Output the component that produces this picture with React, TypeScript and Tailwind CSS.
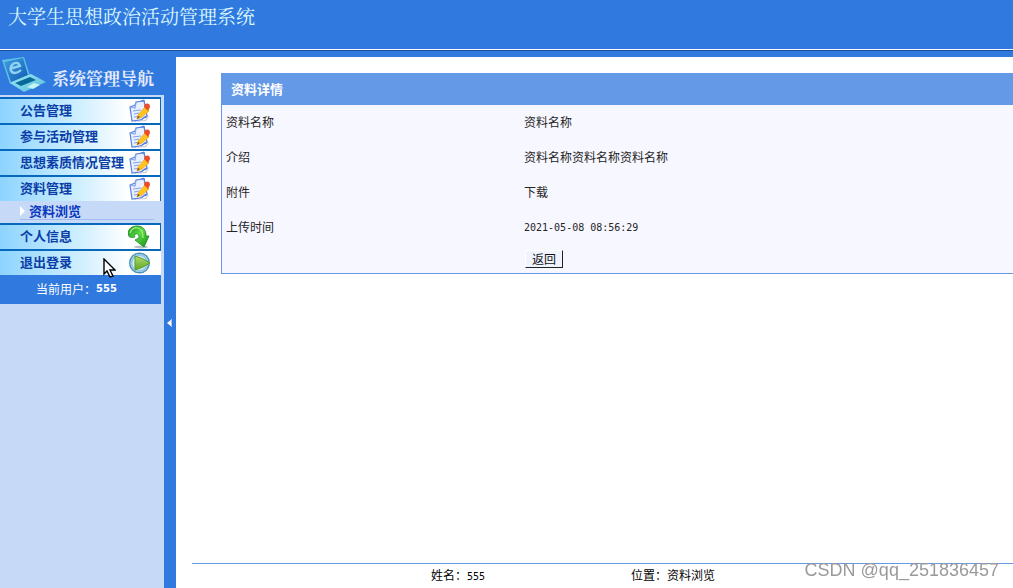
import React from "react";

function LaptopIcon() {
  return (
    <svg viewBox="0 0 46 36" className="h-9 w-[46px] shrink-0" aria-hidden="true">
      <defs>
        <linearGradient id="screen" x1="0" y1="0" x2="1" y2="1">
          <stop offset="0" stopColor="#3fa0e0" />
          <stop offset="1" stopColor="#1259b4" />
        </linearGradient>
        <linearGradient id="deck" x1="0" y1="0" x2="1" y2="1">
          <stop offset="0" stopColor="#a6ecf2" />
          <stop offset="1" stopColor="#4fb9dc" />
        </linearGradient>
      </defs>
      <path d="M2 3 24 0l6 19-20 8z" fill="#5cc3e6" />
      <path d="M4 5 23 1l5 17-17 7z" fill="url(#screen)" />
      <path d="M10 26 31 17l15 8-22 10z" fill="url(#deck)" />
      <path d="M15 26 30 20l6 3-15 6z" fill="#086a98" />
      <path d="m27 30 7-4 6 2-7 4z" fill="#c4f4f4" />
      <path d="M11 11.500 20 9c-1-4-6-4-8-1-3 4-1 8 3 8 3 0 5-2 6-3" fill="none" stroke="#8fd3f4" strokeWidth="2.400" />
    </svg>
  );
}

function NoteIcon() {
  return (
    <svg viewBox="0 0 24 24" className="size-6" aria-hidden="true">
      <path d="m4 23 14-1 4-6-5 5z" fill="#8c8ca0" opacity=".5" />
      <path d="M8 4 16 1l3 17-12 4z" fill="#d9e7ff" stroke="#4b78dc" strokeWidth="1" />
      <path d="m2 8 5-2 1-3 8-1 3 15c-3 0-4 4-7 4l-8 1z" fill="#e8f0ff" stroke="#5b80de" strokeWidth="1.200" />
      <path d="m2 8 5 1 1-6M5 12l8-1M6 15l5-1M6 18l6-1" fill="none" stroke="#83a5ed" strokeWidth="1.200" />
      <path d="m10 16 7-8 4 4-7 6-5 2z" fill="#ffc51e" stroke="#f0a014" strokeWidth=".7" />
      <path d="m10 17 2 1-3 2z" fill="#704c2b" />
      <path d="m16 8 1-3q5-2 5 3l-2 4z" fill="#ee4c27" />
    </svg>
  );
}

function ArrowIcon() {
  return (
    <svg viewBox="0 0 24 24" className="size-6" aria-hidden="true">
      <defs>
        <linearGradient id="leaf" x1="0" y1="0" x2="1" y2="1">
          <stop offset="0" stopColor="#138a20" />
          <stop offset=".45" stopColor="#5fdc44" />
          <stop offset="1" stopColor="#128c16" />
        </linearGradient>
      </defs>
      <ellipse cx="13" cy="22" rx="7" ry="1.500" fill="#8b9b91" opacity=".6" />
      <path d="M0 9C0 4 4 1 9 1c6 0 9 4 9 10h3l-5 11-9-7 4-2c0-3-1-5-3-4-2 0-2 2-1 3-4 1-7 0-7-3z" fill="url(#leaf)" stroke="#15861e" strokeWidth=".8" />
      <path d="M2 8c1-4 5-6 8-5 4 1 5 5 5 10" fill="none" stroke="#a1f378" strokeWidth="1.200" />
    </svg>
  );
}

function PlayIcon() {
  return (
    <svg viewBox="0 0 24 24" className="size-6" aria-hidden="true">
      <defs>
        <linearGradient id="play" x1="0" y1="0" x2="0" y2="1">
          <stop offset="0" stopColor="#b4dc70" />
          <stop offset="1" stopColor="#5aa822" />
        </linearGradient>
      </defs>
      <circle cx="11.500" cy="12" r="9.800" fill="#d6ecf7" stroke="#4a92b8" strokeWidth="1.500" />
      <circle cx="11.500" cy="12" r="8" fill="none" stroke="#8fc8e6" strokeWidth="1.800" />
      <path d="M7 5q8 2 15 7-7 5-15 7z" fill="url(#play)" stroke="#5c9c2c" strokeWidth="1" />
    </svg>
  );
}

type ItemProps = { label: string; icon: React.ReactNode; edge?: boolean };

function MenuItem({ label, icon, edge }: ItemProps) {
  return (
    <a
      href="#"
      className={`flex h-[26px] items-center justify-between border-t-2 border-t-[#0868bd] bg-linear-to-r from-[#8cd4ff] via-[#d0efff] via-50% to-white to-80% pl-5 text-[13px] font-bold whitespace-nowrap text-[#0b3ea6] ${
        edge ? "border-r border-r-[#0868bd] pr-2" : "pr-[9px]"
      }`}
    >
      <span className="pb-0.5">{label}</span>
      <span className="-ml-2 shrink-0">{icon}</span>
    </a>
  );
}

function Sidebar() {
  return (
    <aside className="flex w-[164px] shrink-0 flex-col bg-[#c6daf7]">
      <div className="flex h-[38px] items-start gap-1.5 bg-[#3079df]">
        <LaptopIcon />
        <h2 className="pt-[9px] font-['Noto_Serif_CJK_SC','Noto_Sans_CJK_SC',serif] text-[17px] leading-6 font-bold whitespace-nowrap text-[#e4ebfc]">
          系统管理导航
        </h2>
      </div>
      <nav className="mt-0.5 mr-[3px]">
        <MenuItem label="公告管理" icon={<NoteIcon />} edge />
        <MenuItem label="参与活动管理" icon={<NoteIcon />} edge />
        <MenuItem label="思想素质情况管理" icon={<NoteIcon />} edge />
        <MenuItem label="资料管理" icon={<NoteIcon />} edge />
        <div className="h-[22px] pr-[7px] pl-5">
          <a
            href="#"
            className="flex h-[19px] items-center gap-1 border-b border-[#9fbcf0] pt-0.5 text-[13px] font-bold text-[#0838c0]"
          >
            <svg viewBox="0 0 5 10" className="h-2.5 w-[5px]" aria-hidden="true">
              <path d="M0 0 5 5 0 10z" fill="#fff" />
            </svg>
            资料浏览
          </a>
        </div>
        <MenuItem label="个人信息" icon={<ArrowIcon />} edge />
        <MenuItem label="退出登录" icon={<PlayIcon />} />
        <p className="flex h-[29px] items-center bg-[#3079df] pb-0.5 pl-9 text-xs text-white">
          当前用户：
          <b className="font-['DejaVu_Sans',sans-serif] text-[10px]">555</b>
        </p>
      </nav>
    </aside>
  );
}

const rows = [
  { label: "资料名称", value: "资料名称" },
  { label: "介绍", value: "资料名称资料名称资料名称" },
  { label: "附件", value: <a href="#">下载</a> },
  {
    label: "上传时间",
    value: <span className="font-['DejaVu_Sans_Mono',monospace] text-[10px]">2021-05-08 08:56:29</span>,
  },
];

function Details() {
  return (
    <section className="ml-[45px] border-b border-l border-[#6399e7] bg-[#f7f7ff]">
      <h3 className="flex h-8 items-center bg-[#6399e7] pl-[9px] text-[13px] font-bold text-white">资料详情</h3>
      <table className="w-full table-fixed text-left text-xs text-[#252525]">
        <tbody>
          {rows.map((row) => (
            <tr key={row.label} className="h-[35px]">
              <th scope="row" className="w-[298px] pb-0.5 pl-1 font-normal">
                {row.label}
              </th>
              <td className="pb-0.5 pl-1">{row.value}</td>
            </tr>
          ))}
          <tr className="h-7">
            <td />
            <td className="pl-[5px] align-middle">
              <button
                type="button"
                className="flex h-[18px] w-[38px] items-center justify-center border-t border-r border-b border-l border-t-white border-r-[#222] border-b-[#222] border-l-white bg-[#eff4ff] text-xs text-[#111]"
              >
                返回
              </button>
            </td>
          </tr>
        </tbody>
      </table>
    </section>
  );
}

export default function App() {
  return (
    <div className="relative flex min-h-screen flex-col overflow-hidden bg-[#3079df] font-['Noto_Sans_CJK_SC',sans-serif]">
      <header className="h-[51px] border-b border-[#164f9d] bg-[#3079df]">
        <div className="h-[50px] border-b border-white pt-1 pl-2">
          <h1 className="font-['Noto_Serif_CJK_SC','Noto_Sans_CJK_SC',serif] text-[19px] leading-6 text-[#dffaff]">
            大学生思想政治活动管理系统
          </h1>
        </div>
      </header>
      <div className="flex grow pt-1.5">
        <Sidebar />
        <button type="button" aria-label="收起导航" className="flex w-3 shrink-0 items-center justify-start pl-[3px]">
          <svg viewBox="0 0 5 8" className="h-2 w-[5px]" aria-hidden="true">
            <path d="M5 0v8L0 4z" fill="#fff" />
            <path d="M4.500 0v8" stroke="#c8b8f0" />
          </svg>
        </button>
        <div className="flex min-w-0 grow flex-col bg-white pt-4">
          <Details />
          <footer className="mt-auto ml-4 flex h-[25px] items-center border-t border-[#6399e7] pb-0.5 text-xs text-black">
            <p className="ml-[239px] w-[200px]">
              姓名：<span className="font-['DejaVu_Sans_Mono',monospace] text-[10px]">555</span>
            </p>
            <p>位置：资料浏览</p>
          </footer>
        </div>
      </div>
      <svg viewBox="0 0 13 20" className="absolute top-[258px] left-[103px] h-5 w-[13px]" aria-hidden="true">
        <path d="M1 1v15l3-3 3 6 3-1-3-6h5z" fill="#fff" stroke="#000" strokeWidth="1.400" />
      </svg>
      <span className="absolute right-3.5 bottom-2 font-['Liberation_Sans',sans-serif] text-[18px] leading-5 text-[#9a9a9a] drop-shadow-[1px_1px_0_#fff]">
        CSDN @qq_251836457
      </span>
    </div>
  );
}
